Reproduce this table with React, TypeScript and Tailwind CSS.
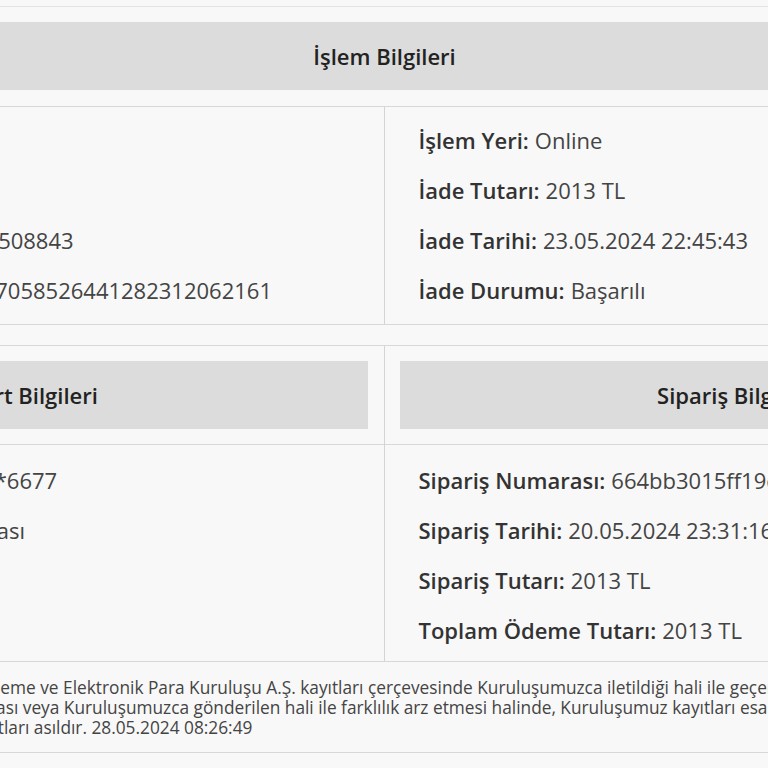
import type { ReactNode } from 'react'

type Item = { label: string; value: string }

const ISLEM_LEFT: Item[] = [
  { label: 'İşlem Tipi', value: 'İade' },
  { label: 'Üye İşyeri', value: 'Online' },
  { label: 'İşlem Referans No', value: '240523508843' },
  { label: 'Provizyon No', value: '41238495627058526441282312062161' },
]

const ISLEM_RIGHT: Item[] = [
  { label: 'İşlem Yeri', value: 'Online' },
  { label: 'İade Tutarı', value: '2013 TL' },
  { label: 'İade Tarihi', value: '23.05.2024 22:45:43' },
  { label: 'İade Durumu', value: 'Başarılı' },
]

const KART: Item[] = [
  { label: 'Kart Numarası', value: '5218******6677' },
  { label: 'Kart Bankası', value: 'Garanti Bankası' },
]

const SIPARIS: Item[] = [
  { label: 'Sipariş Numarası', value: '664bb3015ff19c2a8e4d7b10' },
  { label: 'Sipariş Tarihi', value: '20.05.2024 23:31:16' },
  { label: 'Sipariş Tutarı', value: '2013 TL' },
  { label: 'Toplam Ödeme Tutarı', value: '2013 TL' },
]

function Rows({ items }: { items: Item[] }) {
  return (
    <div className="pl-[34px]">
      {items.map((it) => (
        <div key={it.label} className="h-[50px] flex items-center whitespace-nowrap">
          <span className="font-semibold text-[#333]">{it.label}:</span>
          <span className="ml-[6px] text-[#444]">{it.value}</span>
        </div>
      ))}
    </div>
  )
}

function HeaderBox({ children }: { children: ReactNode }) {
  return (
    <div className="h-[68px] bg-[#dcdcdc] flex items-center justify-center font-semibold text-[#222]">
      {children}
    </div>
  )
}

export default function App() {
  return (
    <div className="min-h-screen w-full overflow-hidden bg-[#f8f8f8] font-['Open_Sans','Noto_Sans',sans-serif] text-[22px]">
      <div className="w-[1403px] ml-[-317px]">
        <div className="h-[6px]" />

        {/* İşlem Bilgileri */}
        <div className="border-t border-[#e3e3e3] pt-[15px]">
          <HeaderBox>İşlem Bilgileri</HeaderBox>
        </div>
        <div className="mt-[16px] border-y border-[#d8d8d8] grid grid-cols-2">
          <div className="border-r border-[#d4d4d4] pt-[8px] pb-[9px]">
            <Rows items={ISLEM_LEFT} />
          </div>
          <div className="pt-[8px] pb-[9px]">
            <Rows items={ISLEM_RIGHT} />
          </div>
        </div>

        {/* Kart / Sipariş */}
        <div className="mt-[20px] border-y border-[#d8d8d8] grid grid-cols-2">
          <div className="border-r border-[#d4d4d4]">
            <div className="p-[15px] pr-[16px]">
              <HeaderBox>Kart Bilgileri</HeaderBox>
            </div>
            <div className="border-t border-[#d8d8d8] pt-[10px] pb-[6px] h-[217px]">
              <Rows items={KART} />
            </div>
          </div>
          <div>
            <div className="p-[15px]">
              <HeaderBox>Sipariş Bilgileri</HeaderBox>
            </div>
            <div className="border-t border-[#d8d8d8] pt-[10px] pb-[6px] h-[217px]">
              <Rows items={SIPARIS} />
            </div>
          </div>
        </div>

        {/* Açıklama */}
        <div className="pl-[34px] pt-[16px] pb-[14px] border-b border-[#d8d8d8] text-[17.3px] leading-[20px] text-[#444] whitespace-nowrap">
          <div>Bu işlem dekontu, Paynet Dijital Ödeme ve Elektronik Para Kuruluşu A.Ş. kayıtları çerçevesinde Kuruluşumuzca iletildiği hali ile geçerlidir.</div>
          <div>Yine bu dekontun değiştirilmiş olması veya Kuruluşumuzca gönderilen hali ile farklılık arz etmesi halinde, Kuruluşumuz kayıtları esas alınır.</div>
          <div>Uyuşmazlıklarda Kuruluşumuz kayıtları asıldır. 28.05.2024 08:26:49</div>
        </div>
      </div>
    </div>
  )
}
